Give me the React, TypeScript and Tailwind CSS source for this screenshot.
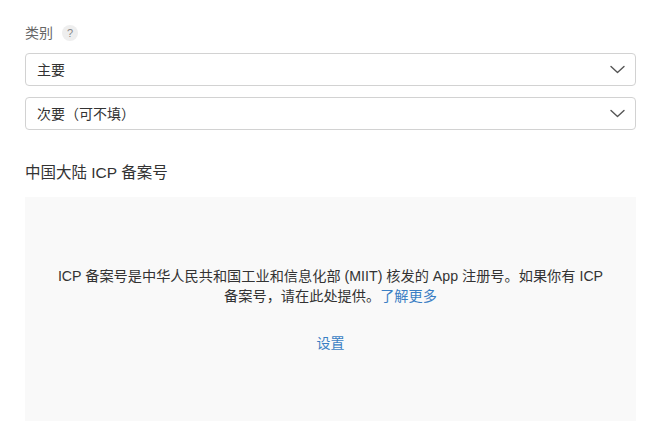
import React from 'react';

const font = { fontFamily: '"Liberation Sans", "Noto Sans CJK SC", sans-serif' };

const Chevron: React.FC = () => (
  <svg width="15" height="9" viewBox="0 0 15 9" fill="none" className="shrink-0">
    <path d="M1 1.5 L7.5 7.5 L14 1.5" stroke="#555" strokeWidth="1.4" strokeLinecap="round" strokeLinejoin="round" />
  </svg>
);

const SelectBox: React.FC<{ label: string }> = ({ label }) => (
  <div className="flex h-[33px] items-center justify-between rounded-[4px] border border-[#d2d2d2] bg-white pl-[11px] pr-[10px]">
    <span className="text-[14px] text-[#333]">{label}</span>
    <Chevron />
  </div>
);

const App: React.FC = () => {
  return (
    <div className="min-h-[444px] bg-white pl-[25px] pr-[24px] pt-[23px] [&_*]:leading-[20px]" style={font}>
      {/* Category */}
      <div className="flex h-[20px] items-center gap-[9px]">
        <span className="text-[14px] text-[#666]">类别</span>
        <span className="flex h-[16px] w-[16px] items-center justify-center rounded-full bg-[#eeeeee] text-[11px] text-[#888]">?</span>
      </div>
      <div className="mt-[10px] flex flex-col gap-[11px]">
        <SelectBox label="主要" />
        <SelectBox label="次要（可不填）" />
      </div>

      {/* ICP */}
      <h2 className="mt-[33px] text-[15.5px] text-[#333]">中国大陆 ICP 备案号</h2>
      <div className="mt-[14px] flex h-[224px] flex-col items-center justify-center bg-[#f9f9f9] px-[20px] text-center">
        <p className="text-[14.2px] text-[#333]">
          ICP 备案号是中华人民共和国工业和信息化部 (MIIT) 核发的 App 注册号。如果你有 ICP
          <br />
          备案号，请在此处提供。<a className="text-[#3b7fc4]" href="#">了解更多</a>
        </p>
        <button className="mt-[27px] text-[14px] text-[#3b7fc4]">设置</button>
      </div>
    </div>
  );
};

export default App;
